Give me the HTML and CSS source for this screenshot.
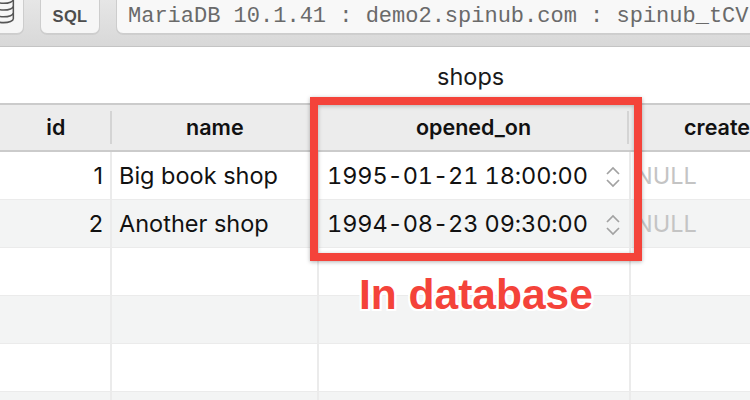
FILE: index.html
```html
<!DOCTYPE html>
<html>
<head>
<meta charset="utf-8">
<link rel="stylesheet" href="styles.css">
</head>
<body>
<div class="page">
  <div class="toolbar">
    <div class="tbtn db">
      <svg width="30" height="34" viewBox="0 0 30 34"><g fill="none" stroke="#555" stroke-width="1.6"><ellipse cx="10" cy="4" rx="10" ry="4"/><path d="M0 4v20c0 2.2 4.5 4 10 4s10-1.8 10-4V4"/><path d="M0 11c0 2.2 4.5 4 10 4s10-1.8 10-4"/><path d="M0 18c0 2.2 4.5 4 10 4s10-1.8 10-4"/></g></svg>
    </div>
    <div class="tbtn sql">SQL</div>
    <div class="addr">MariaDB 10.1.41 : demo2.spinub.com : spinub_tCV</div>
  </div>
  <div class="title"><span>shops</span></div>
  <div class="grid">
    <div class="hrow">
      <div class="hc c1"><span>id</span></div>
      <div class="hc c2"><span>name</span></div>
      <div class="hc c3"><span>opened_on</span></div>
      <div class="hc c4 left"><span>create</span></div>
    </div>
    <div class="row">
      <div class="cell c1 num">1</div>
      <div class="cell c2">Big book shop</div>
      <div class="cell c3 dt"><span>1995-01-21 18:00:00</span><svg class="step" width="16" height="24" viewBox="0 0 16 24"><path d="M2 9L8 3L14 9M2 15L8 21L14 15" fill="none" stroke="#a2a2a2" stroke-width="1.7"/></svg></div>
      <div class="cell c4 null">NULL</div>
    </div>
    <div class="row alt">
      <div class="cell c1 num">2</div>
      <div class="cell c2">Another shop</div>
      <div class="cell c3 dt"><span>1994-08-23 09:30:00</span><svg class="step" width="16" height="24" viewBox="0 0 16 24"><path d="M2 9L8 3L14 9M2 15L8 21L14 15" fill="none" stroke="#a2a2a2" stroke-width="1.7"/></svg></div>
      <div class="cell c4 null">NULL</div>
    </div>
    <div class="row"><div class="cell c1"></div><div class="cell c2"></div><div class="cell c3"></div><div class="cell c4"></div></div>
    <div class="row alt"><div class="cell c1"></div><div class="cell c2"></div><div class="cell c3"></div><div class="cell c4"></div></div>
    <div class="row"><div class="cell c1"></div><div class="cell c2"></div><div class="cell c3"></div><div class="cell c4"></div></div>
    <div class="row alt"><div class="cell c1"></div><div class="cell c2"></div><div class="cell c3"></div><div class="cell c4"></div></div>
  </div>
  <div class="redbox"></div>
  <div class="label">In database</div>
</div>
</body>
</html>
```

FILE: styles.css
```css
html, body {
  margin: 0;
  padding: 0;
  background: #fff;
}
.page {
  position: relative;
  width: 750px;
  height: 400px;
  overflow: hidden;
  font-family: "Inter", "Liberation Sans", sans-serif;
  color: #111;
}
.toolbar {
  height: 46px;
  display: flex;
  align-items: flex-start;
  gap: 16px;
  background: linear-gradient(#e6e6e6, #d8d8d8);
  border-bottom: 1px solid #c4c4c4;
  margin-bottom: 1px;
}
.tbtn, .addr {
  margin-top: -8px;
  height: 42px;
  box-sizing: border-box;
  background: #f6f6f6;
  border: 1px solid #cdcdcd;
  border-radius: 7px;
  box-shadow: 0 1px 0 rgba(0,0,0,0.06);
}
.tbtn.db {
  margin-left: -20px;
  width: 44px;
  display: flex;
  justify-content: flex-start;
  padding-left: 15px;
  padding-top: 4px;
  overflow: hidden;
}
.tbtn.db svg {
  margin-left: -2px;
  margin-top: -2px;
}
.tbtn.sql {
  width: 60px;
  display: flex;
  align-items: center;
  justify-content: center;
  padding-top: 7px;
  font-family: "Liberation Sans", sans-serif;
  font-weight: bold;
  font-size: 16.5px;
  letter-spacing: 0.3px;
  color: #4d4d4d;
}
.addr {
  flex: 1;
  margin-right: -40px;
  padding-left: 11px;
  padding-top: 6px;
  display: flex;
  align-items: center;
  font-family: "Liberation Mono", monospace;
  font-size: 22px;
  color: #6a6a6a;
  white-space: nowrap;
  background: #f8f8f8;
}
.title {
  height: 55px;
  display: flex;
  align-items: center;
  padding-left: 437px;
  font-size: 23.5px;
  color: #1a1a1a;
  padding-top: 1px;
  box-sizing: border-box;
}
.grid {
  display: flex;
  flex-direction: column;
}
.hrow {
  display: flex;
  height: 49px;
  box-sizing: border-box;
  background: #ececec;
  border-top: 2px solid #cbcbcb;
  border-bottom: 2px solid #cbcbcb;
}
.c1 { width: 112px; }
.c2 { width: 207px; }
.c3 { width: 312px; }
.c4 { flex: 1; }
.hc {
  box-sizing: border-box;
  display: flex;
  align-items: center;
  justify-content: center;
  font-weight: 600;
  font-size: 21.5px;
  color: #111;
  position: relative;
  padding-bottom: 2px;
}
.hc.left {
  justify-content: flex-start;
  padding-left: 55px;
}
.hc.c1::after, .hc.c2::after, .hc.c3::after {
  content: "";
  position: absolute;
  right: 0;
  top: 6px;
  bottom: 6px;
  width: 2px;
  background: #d4d4d4;
}
.row {
  display: flex;
  height: 48px;
  box-sizing: border-box;
  border-bottom: 1px solid #ebebeb;
  background: #fff;
}
.row.alt {
  background: #f3f4f4;
}
.cell {
  box-sizing: border-box;
  display: flex;
  align-items: center;
  font-size: 23.5px;
  color: #111;
  border-right: 2px solid #ebebeb;
  padding-left: 7px;
  white-space: nowrap;
}
.cell.c4 { border-right: 0; }
.cell.num {
  justify-content: flex-end;
  padding-left: 0;
  padding-right: 7px;
}
.cell.dt {
  padding-left: 8px;
  justify-content: space-between;
  padding-right: 8px;
}
.cell.dt span {
  font-variant-numeric: tabular-nums;
  letter-spacing: -0.1px;
}
.cell.null {
  color: #c4c4c4;
  padding-left: 4px;
}
.step {
  margin-top: 2px;
}
.redbox {
  position: absolute;
  left: 310px;
  top: 97px;
  width: 332px;
  height: 164px;
  box-sizing: border-box;
  border: 8px solid #f4433a;
  box-shadow: 0 1px 4px rgba(0,0,0,0.3), inset 0 1px 4px rgba(0,0,0,0.25);
}
.label {
  position: absolute;
  left: 359px;
  top: 271px;
  font-family: "Liberation Sans", sans-serif;
  font-weight: bold;
  font-size: 42.5px;
  color: #f4433a;
  text-shadow: 0 0 2px #fff, 2px 0 0 #fff, -2px 0 0 #fff, 0 2px 0 #fff, 0 -2px 0 #fff, 2px 2px 0 #fff, -2px -2px 0 #fff, 2px -2px 0 #fff, -2px 2px 0 #fff;
}
```
